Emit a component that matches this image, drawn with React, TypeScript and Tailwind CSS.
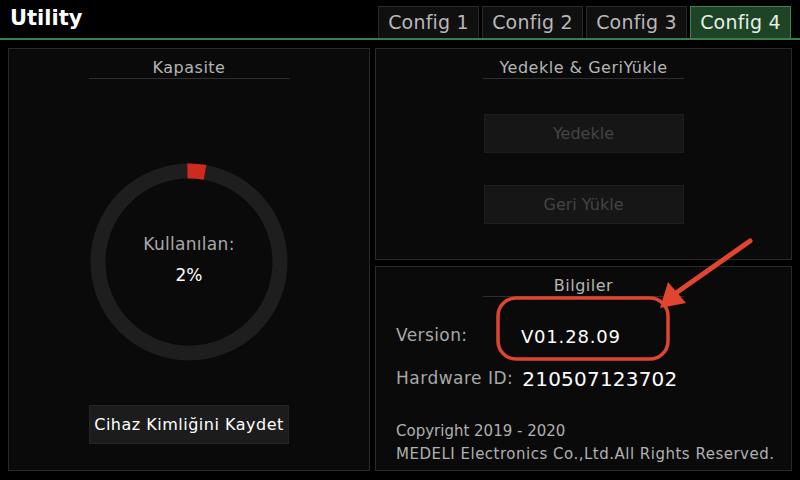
import React from "react";

const tabs = ["Config 1", "Config 2", "Config 3", "Config 4"];

const PanelTitle: React.FC<{ text: string; className?: string }> = ({ text, className }) => (
  <div
    className={`w-[201px] h-[21px] mx-auto border-b border-[#2e2e2e] flex items-center justify-center text-[16px] text-[#b5b5b5] tracking-[0.5px] ${className ?? ""}`}
  >
    {text}
  </div>
);

const App: React.FC = () => {
  const r = 91;
  const circ = 2 * Math.PI * r;

  return (
    <div
      className="relative w-[800px] h-[480px] bg-black overflow-hidden text-[#c8c8c8]"
      style={{ fontFamily: '"DejaVu Sans", "Liberation Sans", sans-serif' }}
    >
      {/* Header */}
      <div className="h-[40px] flex items-end justify-between border-b-2 border-[#3d7c4b]">
        <div className="self-center pl-[10px] text-[21px] font-bold text-white">
          Utility
        </div>
        <div className="flex gap-[3px] pr-[9px]">
          {tabs.map((t, i) => (
            <div
              key={t}
              className={`w-[101px] h-[32px] flex items-center justify-center text-[19px] tracking-[0.2px] border border-b-0 ${
                i === 3
                  ? "bg-[#1c4425] border-[#437f52] text-[#e6efe6]"
                  : "bg-[#101010] border-[#2a2a2a] text-[#b8b8b8]"
              }`}
            >
              {t}
            </div>
          ))}
        </div>
      </div>

      {/* Content */}
      <div className="flex gap-[5px] px-[8px] pt-[8px] h-[440px] pb-[9px]">
        {/* Kapasite */}
        <div className="w-[362px] h-full bg-[#0a0a0a] border border-[#2a2a2a] flex flex-col items-center">
          <PanelTitle text="Kapasite" className="mt-[9px]" />
          <div className="mt-[84px] grid place-items-center">
            <svg width="198" height="198" viewBox="0 0 198 198" className="[grid-area:1/1]">
              <circle cx="99" cy="99" r={r} fill="none" stroke="#1e1e1e" strokeWidth="15" />
              <circle
                cx="99"
                cy="99"
                r={r}
                fill="none"
                stroke="#d02a1f"
                strokeWidth="15"
                strokeDasharray={`${circ * 0.031} ${circ}`}
                transform="rotate(-91 99 99)"
              />
            </svg>
            <div className="[grid-area:1/1] flex flex-col items-center pb-[5px]">
              <div className="text-[17px] text-[#a8a8a8] leading-[22px] tracking-[0.3px]">Kullanılan:</div>
              <div className="text-[17px] text-white leading-[22px] mt-[9px]">2%</div>
            </div>
          </div>
          <button className="mt-[44px] w-[200px] h-[39px] bg-[#1c1c1c] border border-[#252525] text-white text-[16px] tracking-[0.5px]">
            Cihaz Kimliğini Kaydet
          </button>
        </div>

        <div className="flex-1 flex flex-col gap-[6px]">
          {/* Yedekle & GeriYükle */}
          <div className="h-[212px] bg-[#0a0a0a] border border-[#2a2a2a] flex flex-col items-center">
            <PanelTitle text="Yedekle & GeriYükle" className="mt-[9px] w-[200px]" />
            <button className="mt-[35px] w-[200px] h-[39px] bg-[#161616] border border-[#1e1e1e] text-[#444] text-[16px]">
              Yedekle
            </button>
            <button className="mt-[32px] w-[200px] h-[39px] bg-[#161616] border border-[#1e1e1e] text-[#444] text-[16px]">
              Geri Yükle
            </button>
          </div>

          {/* Bilgiler */}
          <div className="flex-1 bg-[#0a0a0a] border border-[#2a2a2a] flex flex-col">
            <PanelTitle text="Bilgiler" className="mt-[9px] w-[200px]" />
            <div className="pl-[20px] mt-[27px] flex items-center h-[24px]">
              <span className="w-[125px] text-[17px] text-[#a8a8a8] tracking-[0.4px]">Version:</span>
              <span className="text-[18px] text-white tracking-[0.8px]">V01.28.09</span>
            </div>
            <div className="pl-[20px] mt-[19px] flex items-center h-[24px] gap-[9px]">
              <span className="text-[17px] text-[#a8a8a8] tracking-[0.5px]">Hardware ID:</span>
              <span className="text-[20px] text-white tracking-[0.2px]">210507123702</span>
            </div>
            <div className="pl-[20px] mt-[29px] text-[15px] text-[#b0b0b0] leading-[23px]">
              <div>Copyright 2019 - 2020</div>
              <div className="tracking-[0.5px]">MEDELI Electronics Co.,Ltd.All Rights Reserved.</div>
            </div>
          </div>
        </div>
      </div>

      {/* Annotation overlay */}
      <svg className="absolute inset-0 pointer-events-none" width="800" height="480">
        <rect x="498" y="298" width="170" height="61" rx="18" fill="none" stroke="#e0452f" strokeWidth="3.5" />
        <line x1="750" y1="241" x2="676" y2="293" stroke="#e0452f" strokeWidth="5" strokeLinecap="round" />
        <polygon points="660,308 668,282 686,303" fill="#e0452f" />
      </svg>
    </div>
  );
};

export default App;
